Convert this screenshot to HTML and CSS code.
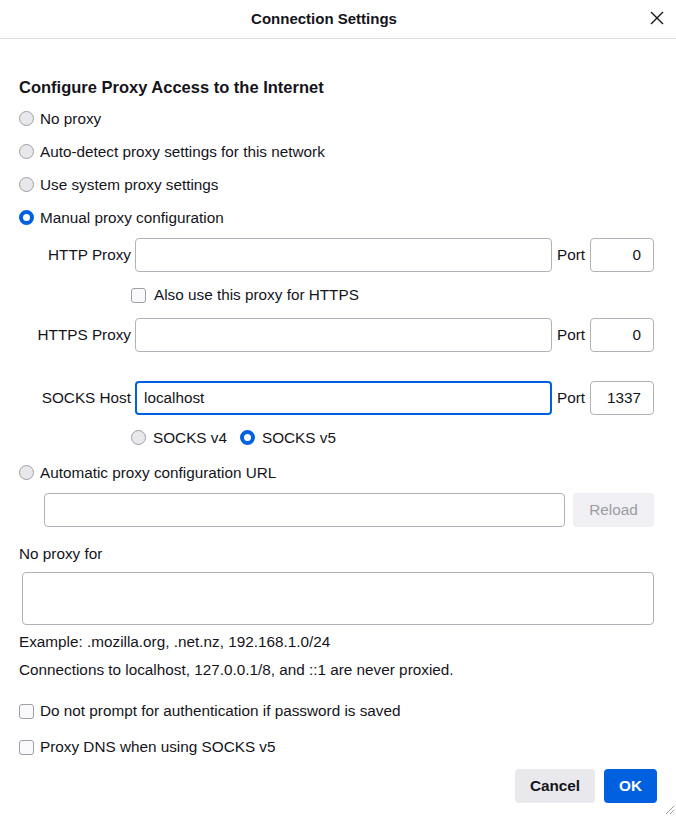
FILE: index.html
```html
<!DOCTYPE html>
<html>
<head>
<meta charset="utf-8">
<title>Connection Settings</title>
<link rel="stylesheet" href="styles.css">
</head>
<body>
<div class="dialog">
  <div class="titlebar">
    <div class="title">Connection Settings</div>
    <div class="close">
      <svg width="14" height="14" viewBox="0 0 14 14"><path d="M1 1 L13 13 M13 1 L1 13" stroke="#15141a" stroke-width="1.4" fill="none"/></svg>
    </div>
  </div>
  <div class="content">
    <div class="heading">Configure Proxy Access to the Internet</div>
    <div class="opt"><span class="radio"></span>No proxy</div>
    <div class="opt"><span class="radio"></span>Auto-detect proxy settings for this network</div>
    <div class="opt"><span class="radio"></span>Use system proxy settings</div>
    <div class="opt"><span class="radio on"></span>Manual proxy configuration</div>

    <div class="field first">
      <span class="flabel">HTTP Proxy</span>
      <span class="input grow"></span>
      <span class="plabel">Port</span>
      <span class="input port">0</span>
    </div>
    <div class="subrow cbrow"><span class="check"></span>Also use this proxy for HTTPS</div>
    <div class="field">
      <span class="flabel">HTTPS Proxy</span>
      <span class="input grow"></span>
      <span class="plabel">Port</span>
      <span class="input port">0</span>
    </div>
    <div class="field socks">
      <span class="flabel">SOCKS Host</span>
      <span class="input grow focus">localhost</span>
      <span class="plabel">Port</span>
      <span class="input port">1337</span>
    </div>
    <div class="subrow sockver">
      <span class="radio"></span><span class="v4">SOCKS v4</span>
      <span class="radio on"></span><span>SOCKS v5</span>
    </div>
    <div class="opt autourl"><span class="radio"></span>Automatic proxy configuration URL</div>
    <div class="urlrow">
      <span class="input grow"></span>
      <span class="reload">Reload</span>
    </div>
    <div class="noproxy">No proxy for</div>
    <div class="textarea"></div>
    <div class="note">Example: .mozilla.org, .net.nz, 192.168.1.0/24</div>
    <div class="note">Connections to localhost, 127.0.0.1/8, and ::1 are never proxied.</div>
    <div class="opt2 firstcb"><span class="check"></span>Do not prompt for authentication if password is saved</div>
    <div class="opt2"><span class="check"></span>Proxy DNS when using SOCKS v5</div>
    <div class="buttons">
      <span class="btn cancel">Cancel</span>
      <span class="btn ok">OK</span>
    </div>
  </div>
  <svg class="grip" width="12" height="12" viewBox="0 0 12 12"><path d="M11 3 L3 11 M11 7 L7 11" stroke="#9a9aa0" stroke-width="1" fill="none"/></svg>
</div>
</body>
</html>
```

FILE: styles.css
```css
html, body {
  margin: 0;
  padding: 0;
  background: #ffffff;
}
body {
  font-family: "Liberation Sans", Arial, sans-serif;
  font-size: 15.3px;
  color: #15141a;
}
.dialog {
  position: relative;
  width: 676px;
  height: 816px;
  overflow: hidden;
}
.titlebar {
  display: flex;
  align-items: center;
  height: 38px;
  border-bottom: 1px solid #e0e0e4;
}
.title {
  width: 648px;
  text-align: center;
  font-weight: bold;
  font-size: 15px;
  margin-top: -1px;
}
.close {
  width: 18px;
  height: 18px;
  display: flex;
  align-items: center;
  justify-content: center;
  margin-top: -2px;
}
.content {
  padding: 36px 22px 0 19px;
  display: flex;
  flex-direction: column;
}
.heading {
  font-weight: bold;
  font-size: 16.5px;
  line-height: 24px;
  height: 24px;
  margin-bottom: 3px;
}
.opt, .opt2 {
  display: flex;
  align-items: center;
  height: 33px;
}
.opt2 {
  height: 36px;
}
.firstcb {
  margin-top: 9px;
}
.autourl {
  margin-top: 2px;
}
.radio {
  box-sizing: border-box;
  width: 15px;
  height: 15px;
  border-radius: 50%;
  border: 1px solid #9e9ea6;
  background: #e8e8ec;
  margin-right: 6px;
  flex: none;
}
.radio.on {
  border: 4px solid #0061e0;
  background: #ffffff;
}
.check {
  box-sizing: border-box;
  width: 15px;
  height: 15px;
  border-radius: 3px;
  border: 1px solid #9e9ea6;
  background: #f9f9fb;
  margin-right: 6px;
  flex: none;
}
.field {
  display: flex;
  align-items: center;
  height: 34px;
}
.field.first {
  margin-top: 4px;
}
.field.socks {
  margin-top: 29px;
}
.flabel {
  width: 112px;
  text-align: right;
  margin-right: 4px;
  flex: none;
}
.input {
  box-sizing: border-box;
  height: 34px;
  border: 1px solid #b1b1b7;
  border-radius: 4px;
  background: #ffffff;
  display: flex;
  align-items: center;
  padding: 0 8px;
}
.grow {
  flex: 1;
}
.input.focus {
  border: 2px solid #0061e0;
  padding: 0 7px;
}
.plabel {
  margin: 0 5px;
}
.port {
  width: 64px;
  flex: none;
  justify-content: flex-end;
  padding-right: 12px;
}
.subrow {
  display: flex;
  align-items: center;
  padding-left: 112px;
}
.cbrow {
  height: 46px;
}
.cbrow .check {
  margin-right: 8px;
}
.sockver {
  height: 33px;
  margin-top: 6px;
}
.sockver .radio {
  margin-right: 7px;
}
.v4 {
  margin-right: 13px;
}
.urlrow {
  display: flex;
  align-items: center;
  margin-top: 4px;
  padding-left: 25px;
}
.reload {
  box-sizing: border-box;
  width: 81px;
  height: 34px;
  margin-left: 8px;
  background: #f0f0f4;
  color: #9b9ba2;
  border-radius: 4px;
  display: flex;
  align-items: center;
  justify-content: center;
}
.noproxy {
  margin-top: 17px;
  line-height: 20px;
}
.textarea {
  box-sizing: border-box;
  margin: 8px 0 0 3px;
  height: 53px;
  border: 1px solid #b1b1b7;
  border-radius: 4px;
}
.note {
  line-height: 28px;
}
.textarea + .note {
  margin-top: 3px;
}
.buttons {
  display: flex;
  justify-content: flex-end;
  margin-top: 4px;
  margin-right: -3px;
}
.btn {
  height: 34px;
  border-radius: 4px;
  display: flex;
  align-items: center;
  justify-content: center;
  font-weight: 600;
}
.cancel {
  width: 80px;
  background: #e9e9ed;
  margin-right: 9px;
}
.ok {
  width: 53px;
  background: #0061e0;
  color: #ffffff;
  font-weight: bold;
}
.grip {
  position: absolute;
  right: 1px;
  bottom: 1px;
}
```
